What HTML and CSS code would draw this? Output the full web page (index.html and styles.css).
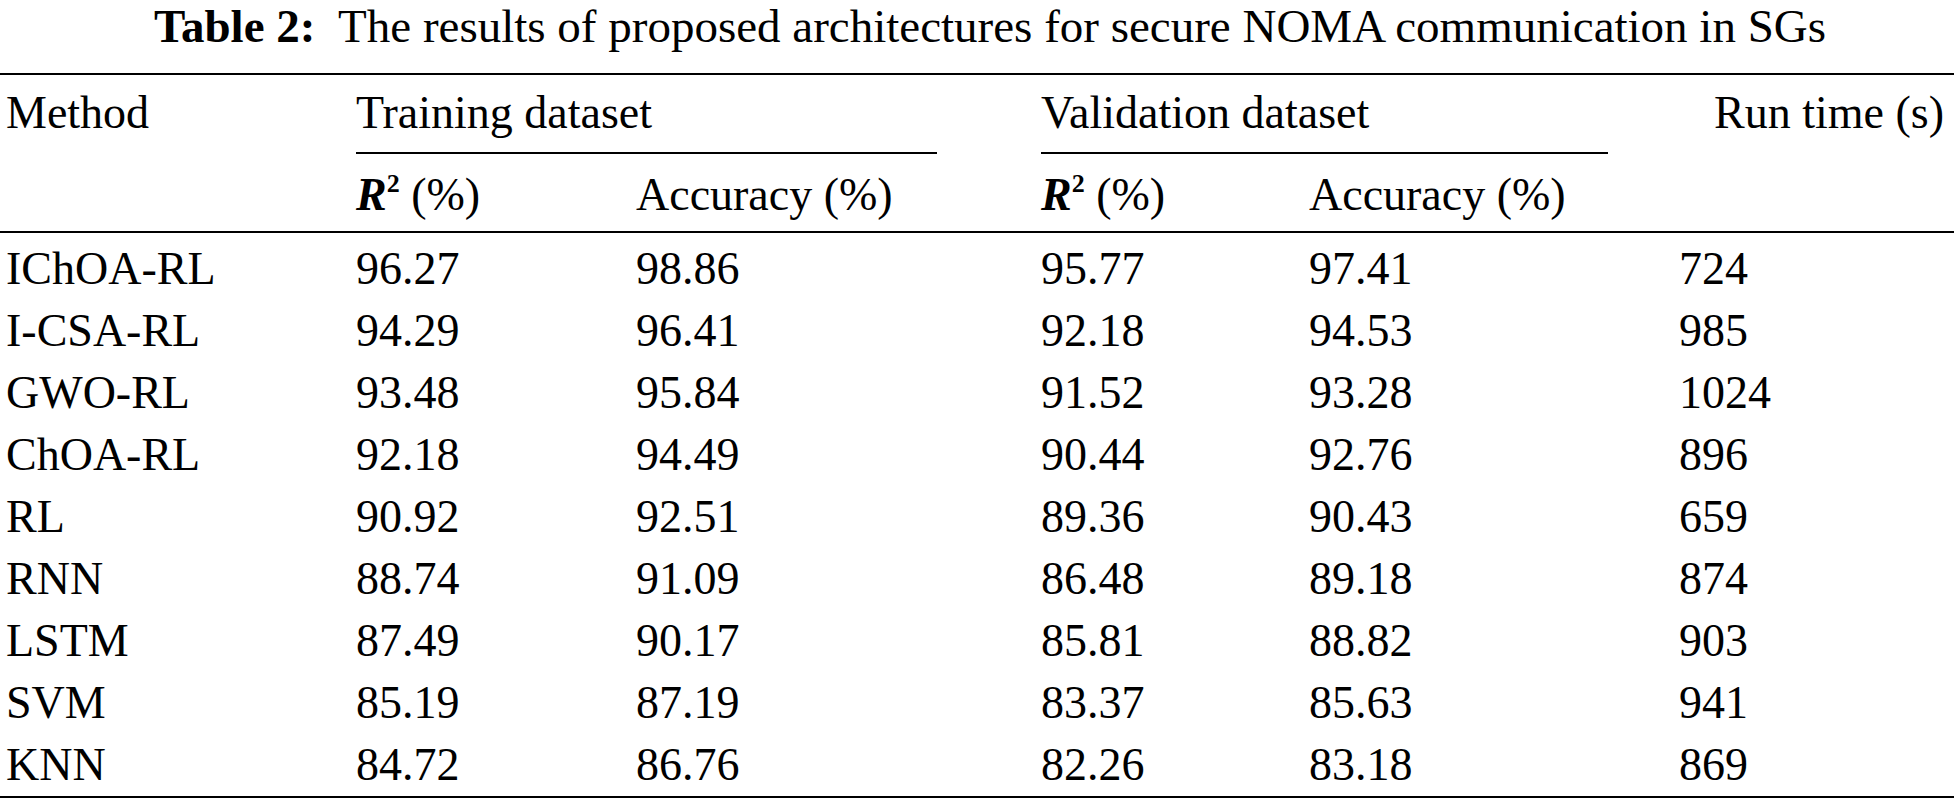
FILE: index.html
```html
<!DOCTYPE html>
<html lang="en">
<head>
<meta charset="utf-8">
<title>Table 2</title>
<link rel="stylesheet" href="styles.css">
</head>
<body>
<div class="page">
  <div class="caption"><span class="cap-label">Table 2:</span>&nbsp; The results of proposed architectures for secure NOMA communication in SGs</div>
  <table class="results">
    <colgroup>
      <col class="c-method">
      <col class="c-tr2">
      <col class="c-tacc">
      <col class="c-vr2">
      <col class="c-vacc">
      <col class="c-run">
    </colgroup>
    <thead>
      <tr class="h1">
        <th rowspan="2" class="span2 first">Method</th>
        <th colspan="2"><div class="group train">Training dataset</div></th>
        <th colspan="2"><div class="group val">Validation dataset</div></th>
        <th rowspan="2" class="span2 run">Run time (s)</th>
      </tr>
      <tr class="h2">
        <th><span class="r2"><b class="rr">R</b><sup>2</sup></span> (%)</th>
        <th>Accuracy (%)</th>
        <th><span class="r2"><b class="rr">R</b><sup>2</sup></span> (%)</th>
        <th>Accuracy (%)</th>
      </tr>
    </thead>
    <tbody>
      <tr class="first-row"><td class="first">IChOA-RL</td><td>96.27</td><td>98.86</td><td>95.77</td><td>97.41</td><td>724</td></tr>
      <tr><td class="first">I-CSA-RL</td><td>94.29</td><td>96.41</td><td>92.18</td><td>94.53</td><td>985</td></tr>
      <tr><td class="first">GWO-RL</td><td>93.48</td><td>95.84</td><td>91.52</td><td>93.28</td><td>1024</td></tr>
      <tr><td class="first">ChOA-RL</td><td>92.18</td><td>94.49</td><td>90.44</td><td>92.76</td><td>896</td></tr>
      <tr><td class="first">RL</td><td>90.92</td><td>92.51</td><td>89.36</td><td>90.43</td><td>659</td></tr>
      <tr><td class="first">RNN</td><td>88.74</td><td>91.09</td><td>86.48</td><td>89.18</td><td>874</td></tr>
      <tr><td class="first">LSTM</td><td>87.49</td><td>90.17</td><td>85.81</td><td>88.82</td><td>903</td></tr>
      <tr><td class="first">SVM</td><td>85.19</td><td>87.19</td><td>83.37</td><td>85.63</td><td>941</td></tr>
      <tr><td class="first">KNN</td><td>84.72</td><td>86.76</td><td>82.26</td><td>83.18</td><td>869</td></tr>
    </tbody>
  </table>
</div>
</body>
</html>
```
FILE: styles.css
```css
html, body {
  margin: 0;
  padding: 0;
  background: #ffffff;
}

body {
  font-family: "Liberation Serif", "Times New Roman", serif;
  color: #000000;
}

.page {
  width: 1954px;
}

.caption {
  font-size: 47px;
  line-height: 40px;
  text-align: center;
  margin-top: 6px;
  margin-bottom: 27px;
  padding-left: 26px;
}

.cap-label {
  font-weight: bold;
}

.results {
  width: 1954px;
  border-collapse: collapse;
  table-layout: fixed;
  font-size: 46px;
  border-top: 2px solid #000;
  border-bottom: 2px solid #000;
}

.c-method { width: 356px; }
.c-tr2 { width: 280px; }
.c-tacc { width: 405px; }
.c-vr2 { width: 268px; }
.c-vacc { width: 370px; }
.c-run { width: 275px; }

.results th,
.results td {
  padding: 0;
  text-align: left;
  font-weight: normal;
  white-space: nowrap;
}

.results th.first,
.results td.first {
  padding-left: 6px;
}

.h1 th {
  vertical-align: top;
  padding-top: 13px;
  line-height: 49px;
}

.results th.span2 {
  border-bottom: 2px solid #000;
}

.results th.run {
  text-align: right;
  padding-right: 10px;
}

.group {
  padding-bottom: 15px;
  border-bottom: 2px solid #000;
}

.group.train { margin-right: 104px; }
.group.val { margin-right: 71px; }

.h2 th {
  padding-top: 16px;
  padding-bottom: 12px;
  line-height: 49px;
  border-bottom: 2px solid #000;
}

.r2 {
  white-space: nowrap;
}

.rr {
  font-weight: bold;
  font-style: italic;
}

.r2 sup {
  font-weight: bold;
  font-size: 26px;
  vertical-align: 18px;
  line-height: 0;
}

.results td {
  line-height: 62px;
}

.first-row td {
  padding-top: 5px;
}
```
